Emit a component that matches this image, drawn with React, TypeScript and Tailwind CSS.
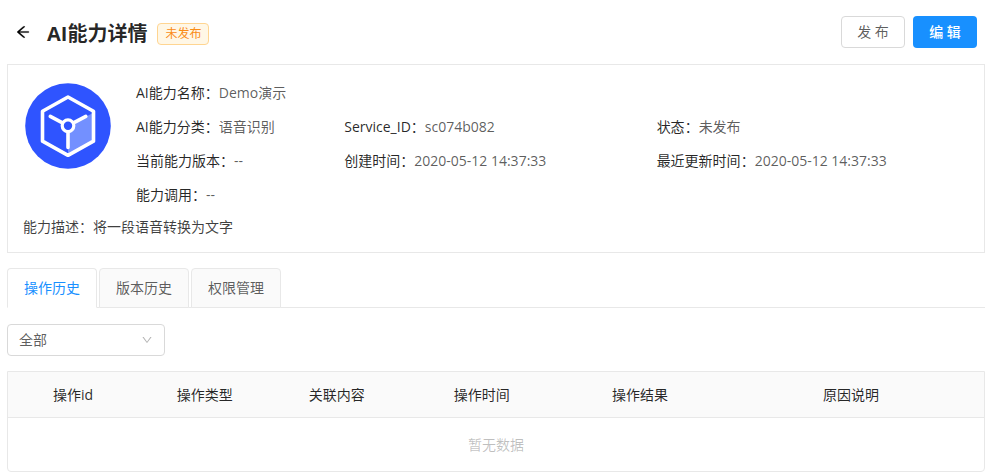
import { useState } from 'react';
import clsx from 'clsx';
import { AiOutlineArrowLeft, AiOutlineDown } from 'react-icons/ai';

const TABS = ['操作历史', '版本历史', '权限管理'];

const COLUMNS = [
  { title: '操作id', width: 'w-[100px]' },
  { title: '操作类型', width: 'w-[100px]' },
  { title: '关联内容', width: 'w-[100px]' },
  { title: '操作时间', width: 'w-[120px]' },
  { title: '操作结果', width: 'w-[120px]' },
  { title: '原因说明', width: 'w-[200px]' },
];

const FIELDS = [
  { label: 'AI能力名称', value: 'Demo演示', className: 'col-span-3' },
  { label: 'AI能力分类', value: '语音识别' },
  { label: 'Service_ID', value: 'sc074b082' },
  { label: '状态', value: '未发布' },
  { label: '当前能力版本', value: '--' },
  { label: '创建时间', value: '2020-05-12 14:37:33' },
  { label: '最近更新时间', value: '2020-05-12 14:37:33' },
  { label: '能力调用', value: '--', className: 'col-span-3' },
];

function AbilityLogo() {
  return (
    <svg viewBox="0 0 86 86" className="size-[86px] shrink-0" fill="none" aria-hidden="true">
      <circle cx="43" cy="43" r="42.8" fill="#2f54ff" />
      <path d="M43 43 68 30v28.5L43 72.5Z" fill="#7390ff" />
      <path
        d="M43 14 68.5 28.2v30L43 72.3 17.5 58.2v-30Z"
        stroke="#fff"
        strokeWidth="3.6"
        strokeLinejoin="round"
      />
      <path
        d="M38 40.2 25.3 33.4M48 40.2 60.8 33.4M43 48.5V64.5"
        stroke="#fff"
        strokeWidth="3.6"
        strokeLinecap="round"
      />
      <circle cx="43" cy="42.7" r="5.8" fill="#2f54ff" stroke="#fff" strokeWidth="3.2" />
    </svg>
  );
}

function Header() {
  return (
    <header className="flex h-16 items-center px-2">
      <button type="button" aria-label="返回" className="text-base text-black">
        <AiOutlineArrowLeft strokeWidth="24" stroke="currentColor" />
      </button>
      <div className="ml-4 flex items-center gap-[10px] pt-1">
        <h1 className="text-xl font-bold text-black/85">AI能力详情</h1>
        <span className="rounded border border-[#ffd591] bg-[#fff7e6] px-[7px] text-xs leading-5 text-[#fa8c16]">
          未发布
        </span>
      </div>
      <div className="ml-auto flex gap-2">
        <button type="button" className="h-8 w-16 rounded border border-[#d9d9d9] bg-white text-black/65">
          发 布
        </button>
        <button type="button" className="h-8 w-16 rounded bg-[#1890ff] font-medium text-white">
          编 辑
        </button>
      </div>
    </header>
  );
}

function DetailCard() {
  return (
    <section className="border border-[#e8e8e8] px-[15px] pt-3 pb-[11px]">
      <div className="flex gap-[25px]">
        <div className="pt-[6px] pl-[2px]">
          <AbilityLogo />
        </div>
        <dl className="grid flex-1 grid-cols-[2fr_3fr_3fr]">
          {FIELDS.map((f) => (
            <div key={f.label} className={clsx('flex h-[34px] leading-8 whitespace-nowrap', f.className)}>
              <dt className="text-black/85">{f.label}：</dt>
              <dd className="text-black/65">{f.value}</dd>
            </div>
          ))}
        </dl>
      </div>
      <p className="leading-7 text-black/75">能力描述：将一段语音转换为文字</p>
    </section>
  );
}

export default function App() {
  const [tab, setTab] = useState(TABS[0]);

  return (
    <main className="bg-white pr-3 pl-[7px] font-['Open_Sans','Noto_Sans_CJK_SC',sans-serif] text-sm">
      <Header />
      <DetailCard />

      <div role="tablist" className="mt-[15px] flex gap-[2px] border-b border-[#e8e8e8]">
        {TABS.map((name) => (
          <button
            key={name}
            type="button"
            role="tab"
            aria-selected={name === tab}
            onClick={() => setTab(name)}
            className={clsx(
              '-mb-px h-10 rounded-t border border-[#e8e8e8] px-4',
              name === tab ? 'border-b-white bg-white text-[#1890ff]' : 'bg-[#fafafa] text-black/65',
            )}
          >
            {name}
          </button>
        ))}
      </div>

      <div className="relative mt-4 w-[158px]">
        <select
          aria-label="操作类型"
          className="h-8 w-full appearance-none rounded border border-[#d9d9d9] bg-white px-[11px] text-black/65"
        >
          <option>全部</option>
        </select>
        <AiOutlineDown className="pointer-events-none absolute top-[10px] right-3 text-xs text-black/30" />
      </div>

      <table className="mt-[15px] w-full border-separate border-spacing-0 rounded-b border border-[#e8e8e8]">
        <thead>
          <tr className="bg-[#fafafa]">
            {COLUMNS.map((c) => (
              <th
                key={c.title}
                scope="col"
                className={clsx('h-[46px] border-b border-[#e8e8e8] pr-[2px] font-normal text-black/85', c.width)}
              >
                {c.title}
              </th>
            ))}
          </tr>
        </thead>
        <tbody>
          <tr>
            <td colSpan={COLUMNS.length} className="h-[53px] text-center text-black/25">
              暂无数据
            </td>
          </tr>
        </tbody>
      </table>
    </main>
  );
}
